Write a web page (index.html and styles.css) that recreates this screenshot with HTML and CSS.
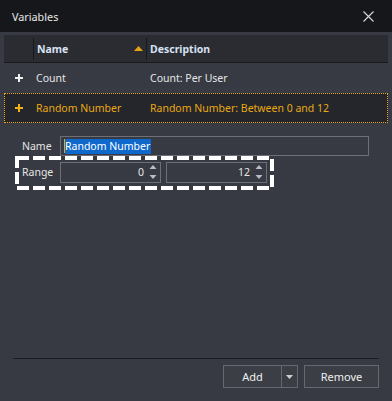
FILE: index.html
```html
<!DOCTYPE html>
<html lang="en">
<head>
    <meta charset="UTF-8">
    <title>Variables</title>
    <link rel="stylesheet" href="styles.css">
</head>
<body>
<div class="window">
    <div class="titlebar">
        <span class="title">Variables</span>
        <svg class="close" width="11" height="11" viewBox="0 0 11 11">
            <path d="M0.5 0.5 L10.5 10.5 M10.5 0.5 L0.5 10.5" stroke="#d4d4d4" stroke-width="1.2"/>
        </svg>
    </div>

    <div class="list">
        <div class="list-head">
            <div class="col-icon"></div>
            <div class="col-name">Name
                <svg class="sort" width="9" height="5" viewBox="0 0 9 5"><path d="M4.5 0 L9 5 L0 5 Z" fill="#e3a414"/></svg>
            </div>
            <div class="col-desc">Description</div>
        </div>
        <div class="list-row">
            <div class="col-icon">
                <svg width="8" height="8" viewBox="0 0 8 8"><path d="M4 0 V8 M0 4 H8" stroke="#f0f0f0" stroke-width="2"/></svg>
            </div>
            <div class="col-name">Count</div>
            <div class="col-desc">Count: Per User</div>
        </div>
        <div class="list-row selected">
            <div class="col-icon">
                <svg width="8" height="8" viewBox="0 0 8 8"><path d="M4 0 V8 M0 4 H8" stroke="#f0b01c" stroke-width="2"/></svg>
            </div>
            <div class="col-name">Random Number</div>
            <div class="col-desc">Random Number: Between 0 and 12</div>
        </div>
    </div>

    <div class="form">
        <div class="field">
            <span class="label">Name</span>
            <div class="textbox"><span class="caret"></span><span class="selection">Random Number</span></div>
        </div>
        <div class="field range">
            <span class="label">Range</span>
            <div class="spin">
                <span class="value">0</span>
                <svg class="arrows" width="8" height="16" viewBox="0 0 8 16">
                    <path d="M4 1 L7.5 5 L0.5 5 Z M4 15 L7.5 11 L0.5 11 Z" fill="#b9bdc5"/>
                </svg>
            </div>
            <div class="spin">
                <span class="value">12</span>
                <svg class="arrows" width="8" height="16" viewBox="0 0 8 16">
                    <path d="M4 1 L7.5 5 L0.5 5 Z M4 15 L7.5 11 L0.5 11 Z" fill="#b9bdc5"/>
                </svg>
            </div>
            <svg class="highlight" width="260" height="34" viewBox="0 0 260 34">
                <rect x="2" y="2" width="255" height="30" fill="none" stroke="#ffffff" stroke-width="4" stroke-dasharray="12 4"/>
            </svg>
        </div>
    </div>

    <div class="spacer"></div>

    <div class="footer">
        <div class="separator"></div>
        <div class="buttons">
            <div class="button split">
                <span class="main">Add</span>
                <span class="drop">
                    <svg width="7" height="4" viewBox="0 0 7 4"><path d="M0 0 H7 L3.5 4 Z" fill="#d0d0d0"/></svg>
                </span>
            </div>
            <div class="button">Remove</div>
        </div>
    </div>
</div>
</body>
</html>
```

FILE: styles.css
```css
body{
    margin: 0;
    background-color: #373a42;
    color: #e6e6e6;
    font-family: "Noto Sans", sans-serif;
    font-size: 10.5px;
}
.window{
    width: 392px;
    height: 401px;
    display: flex;
    flex-direction: column;
}
.titlebar{
    height: 32px;
    background-color: #16171b;
    display: flex;
    align-items: center;
    justify-content: space-between;
    padding: 0 18px 0 12px;
    box-sizing: border-box;
}
.title{
    color: #e8e8e8;
    font-size: 10.8px;
}
.close{
    display: block;
}

.list{
    margin: 3px 4px 0 4px;
}
.list-head{
    height: 27px;
    background-color: #2a2c32;
    border-bottom: 1px solid #18191c;
    display: flex;
    align-items: center;
    font-weight: bold;
    color: #d8e2f2;
}
.list-head .col-icon,
.list-head .col-name{
    border-right: 1px solid #18191c;
    height: 22px;
}
.list-head .col-name{
    width: 106px;
    display: flex;
    align-items: center;
    justify-content: space-between;
    padding-right: 3px;
}
.col-icon{
    width: 29px;
    display: flex;
    align-items: center;
    justify-content: center;
}
.col-name{
    padding-left: 3px;
    display: flex;
    align-items: center;
}
.col-desc{
    padding-left: 3px;
}
.list-row{
    height: 30px;
    display: flex;
    align-items: center;
    box-sizing: border-box;
}
.list-row .col-name{
    width: 111px;
}
.list-row.selected{
    background-color: #25262c;
    border: 1px dotted #e8a60f;
    color: #e8a912;
}
.list-row.selected .col-icon{
    width: 28px;
}
.list-row svg{
    display: block;
}

.form{
    padding: 13px 23px 0 22px;
}
.field{
    display: flex;
    align-items: center;
    height: 20px;
}
.label{
    width: 38px;
    color: #e4e4e4;
}
.textbox{
    flex: 1;
    height: 20px;
    border: 1px solid #6d6f75;
    box-sizing: border-box;
    display: flex;
    align-items: center;
    padding-left: 3px;
}
.caret{
    width: 1px;
    height: 14px;
    background-color: #e8a60f;
}
.selection{
    background-color: #0f68cc;
    color: #ffffff;
    line-height: 15px;
    padding-right: 1px;
}
.range{
    margin-top: 6px;
    position: relative;
}
.spin{
    width: 101px;
    height: 21px;
    border: 1px solid #6d6f75;
    box-sizing: border-box;
    display: flex;
    align-items: center;
    justify-content: flex-end;
    padding-right: 3px;
    margin-right: 5px;
}
.spin .value{
    margin-right: 5px;
}
.arrows{
    display: block;
}
.highlight{
    position: absolute;
    left: -7px;
    top: -6px;
}

.spacer{
    flex: 1;
}
.footer{
    padding: 0 13px 13px 13px;
}
.separator{
    height: 1px;
    background-color: #1c1d21;
    margin-bottom: 6px;
}
.buttons{
    display: flex;
    justify-content: flex-end;
    gap: 6px;
}
.button{
    width: 75px;
    height: 23px;
    border: 1px solid #65686e;
    box-sizing: border-box;
    background-color: #3b3e45;
    display: flex;
    align-items: center;
    justify-content: center;
    color: #eeeeee;
    font-size: 11px;
}
.button.split{
    justify-content: flex-start;
}
.split .main{
    width: 57px;
    text-align: center;
    border-right: 1px solid #65686e;
    height: 21px;
    line-height: 21px;
}
.split .drop{
    flex: 1;
    display: flex;
    justify-content: center;
    align-items: center;
}
```
